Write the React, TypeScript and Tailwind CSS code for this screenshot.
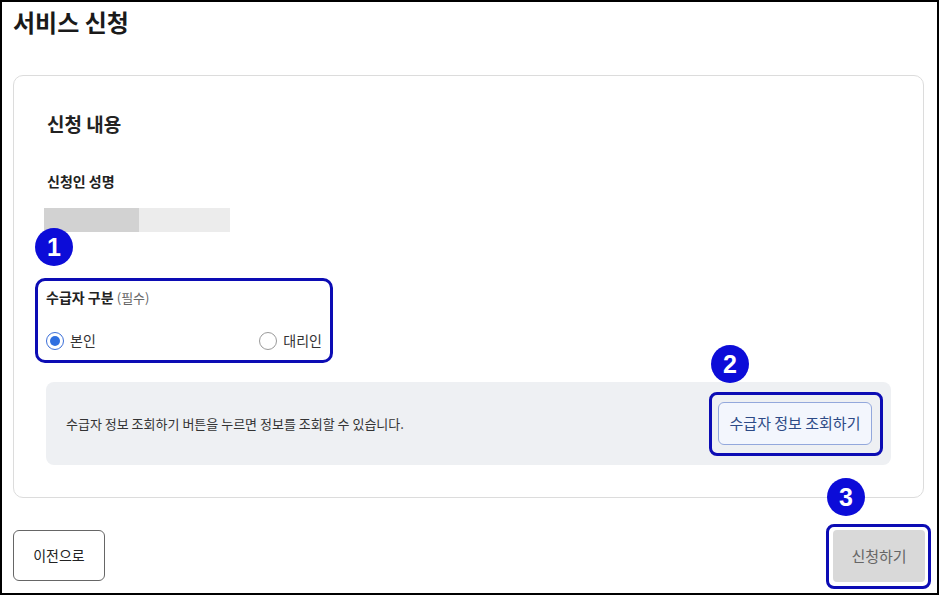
const font = "font-['Noto_Sans_CJK_KR','Noto_Sans',sans-serif]"

function Badge({ n, className }: { n: string; className: string }) {
  return (
    <div
      className={`absolute flex size-[38px] items-center justify-center rounded-full bg-[#0c0cd8] text-[25px] leading-none font-bold text-white ${className}`}
    >
      <span className="font-['Liberation_Sans',sans-serif]">{n}</span>
    </div>
  )
}

function Radio({ label, checked }: { label: string; checked?: boolean }) {
  return (
    <label className="flex items-center gap-[6px]">
      <span
        className={`flex size-[18px] items-center justify-center rounded-full border ${
          checked ? "border-[#3b6fd9]" : "border-[#9a9a9a]"
        } bg-white`}
      >
        {checked && <span className="size-[10px] rounded-full bg-[#2f6fe0]" />}
      </span>
      <span className="text-[14px] text-[#333]">{label}</span>
    </label>
  )
}

export default function App() {
  return (
    <div
      className={`relative box-border h-[595px] w-[939px] border-2 border-black bg-white ${font} text-[#222]`}
    >
      <h1 className="pt-[3px] pl-[11px] text-[24px] leading-[34px] font-bold text-[#1a1a1a]">
        서비스 신청
      </h1>

      <section className="relative mt-[36px] ml-[11px] w-[911px] rounded-[10px] border border-[#dcdcdc] pt-[34px] pb-[32px]">
        <div className="px-8">
          <h2 className="pl-[1px] text-[19px] leading-[27px] font-bold">신청 내용</h2>
          <p className="mt-[34px] pl-[1px] text-[14px] leading-[20px] font-bold">신청인 성명</p>
          <div className="mt-[17px] ml-[-2px] flex h-[24px] w-[186px]">
            <div className="w-[95px] bg-[#d2d2d2]" />
            <div className="flex-1 bg-[#ececec]" />
          </div>

          <div className="mt-[46px] ml-[-11px] box-border h-[85px] w-[298px] rounded-[10px] border-[3px] border-[#0c0cb4] px-[8px] pt-[6px]">
            <p className="text-[14px] leading-[20px] font-bold">
              수급자 구분 <span className="text-[13px] font-normal text-[#666]">(필수)</span>
            </p>
            <div className="mt-[22px] flex items-center justify-between">
              <Radio label="본인" checked />
              <Radio label="대리인" />
            </div>
          </div>

          <div className="mt-[19px] flex h-[83px] items-center justify-between rounded-[8px] bg-[#eef0f3] pr-[19px] pl-[20px]">
            <p className="text-[13px] text-[#333]">
              수급자 정보 조회하기 버튼을 누르면 정보를 조회할 수 있습니다.
            </p>
            <div className="relative">
              <button className="h-[43px] w-[154px] rounded-[6px] border border-[#93a8dc] bg-[#f3f6fd] text-[15px] text-[#2d4a86]">
                수급자 정보 조회하기
              </button>
              <div className="absolute -top-[10px] -right-[11px] -bottom-[11px] -left-[9px] rounded-[8px] border-[3px] border-[#0c0cb4]" />
            </div>
          </div>
        </div>
      </section>

      <div className="mt-[32px] flex items-start justify-between pr-[12px] pl-[11px]">
        <button className="h-[51px] w-[92px] rounded-[6px] border border-[#666] bg-white text-[14px] text-[#222]">
          이전으로
        </button>
        <div className="relative">
          <button className="h-[52px] w-[92px] rounded-[4px] bg-[#d9d9d9] text-[15px] text-[#666]">
            신청하기
          </button>
          <div className="absolute -top-[6px] -right-[6px] -bottom-[7px] -left-[7px] rounded-[8px] border-[3px] border-[#0c0cb4]" />
        </div>
      </div>

      <Badge n="1" className="top-[226px] left-[33px]" />
      <Badge n="2" className="top-[343px] left-[709px]" />
      <Badge n="3" className="top-[476px] left-[825px]" />
    </div>
  )
}
